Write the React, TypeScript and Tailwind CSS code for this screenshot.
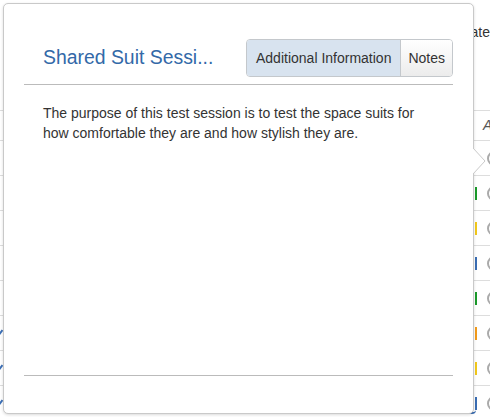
const rows = [
  { bar: 'bg-transparent', check: false },
  { bar: 'bg-[#1a9a2a]', check: false },
  { bar: 'bg-[#f2c81b]', check: false },
  { bar: 'bg-[#3a6db3]', check: false },
  { bar: 'bg-[#1a9a2a]', check: false },
  { bar: 'bg-[#f29b1b]', check: true },
  { bar: 'bg-[#f2c81b]', check: true },
  { bar: 'bg-[#3a6db3]', check: true },
];

function Check() {
  return (
    <svg width="8" height="8" viewBox="0 0 8 8" className="-ml-[5px]">
      <path d="M1 4.5 L3 7 L7.5 1" fill="none" stroke="#3b6fb6" strokeWidth="2" />
    </svg>
  );
}

export default function App() {
  return (
    <div className="relative w-[490px] h-[417px] overflow-hidden bg-white text-[#333] font-['Liberation_Sans',Arial,sans-serif]">
      {/* page behind the popover */}
      <div className="pt-[22px]">
        <div className="h-[88px] flex justify-end text-[14px] leading-[20px]">Update</div>
        <div className="h-[30px] border-t border-[#ddd] flex items-center pl-[483px] text-[14px] italic text-[#555]">A</div>
        {rows.map((r, i) => (
          <div key={i} className="relative h-[35px] border-t border-[#ddd] flex items-center">
            <div className="w-[475px] shrink-0 flex items-center">{r.check && <Check />}</div>
            <div className={`w-[2px] h-[13px] shrink-0 ${r.bar}`} />
            <div className="ml-[10px] w-[15px] h-[15px] shrink-0 rounded-full border-2 border-[#aaa]" />
            {i === rows.length - 1 && (
              <div className="absolute left-[376px] top-[0px] w-[100px] h-[28px] border-b-2 border-[#3a6db3] rounded-br-[4px]" />
            )}
          </div>
        ))}
      </div>

      {/* popover */}
      <div className="absolute left-[3px] top-[3px] w-[471px] h-[411px] flex flex-col bg-white border border-[#c9c9c9] rounded-[5px] shadow-[0_1px_3px_rgba(0,0,0,0.15)]">
        <div className="mx-[20px] pt-[35px] pb-[7px] border-b border-[#bbb] flex items-center justify-between">
          <h3 className="pl-[19px] text-[19.4px] text-[#3369a8] font-normal">Shared Suit Sessi...</h3>
          <div className="flex h-[38px] text-[14px] rounded-[4px] border border-[#c4c8cc] overflow-hidden">
            <button className="px-[9px] bg-[#d8e3ef] border-r border-[#c4c8cc] text-[#333]">Additional Information</button>
            <button className="px-[7px] bg-gradient-to-b from-white to-[#ececec] text-[#333]">Notes</button>
          </div>
        </div>
        <div className="flex-1 mx-[20px] pl-[19px] pr-[19px] pt-[18px] text-[14px] leading-[20px]">
          The purpose of this test session is to test the space suits for how comfortable they are and how stylish they are.
        </div>
        <div className="mx-[20px] border-b border-[#bbb]" />
        <div className="h-[37px]" />
        <svg className="absolute left-[469px] top-[144px]" width="14" height="26" viewBox="0 0 14 26">
          <polygon points="0,0 12,13 0,26" fill="white" />
          <polyline points="0,0 12,13 0,26" fill="none" stroke="#c9c9c9" strokeWidth="1" />
        </svg>
      </div>
    </div>
  );
}
